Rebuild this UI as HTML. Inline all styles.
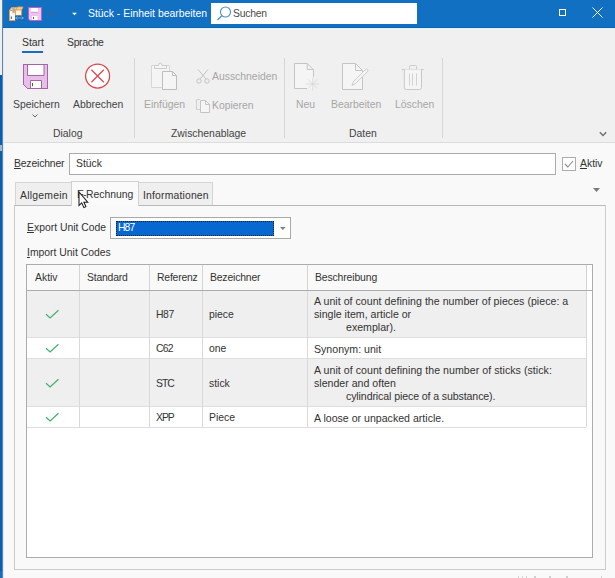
<!DOCTYPE html>
<html><head><meta charset="utf-8">
<style>
*{box-sizing:border-box;margin:0;padding:0}
html,body{width:615px;height:578px;overflow:hidden;background:#f9f9f9;font-family:"Liberation Sans",sans-serif;font-size:10.4px;color:#333}
.a{position:absolute}
.t{position:absolute;white-space:pre;line-height:1}
#strip1{left:0;top:0;width:2px;height:75px;background:#efefef}
#strip2{left:0;top:75px;width:2px;height:496px;background:#0a5eab}
#strip3{left:0;top:571px;width:2px;height:7px;background:#186cc0}
#bord{left:2px;top:0;width:1px;height:578px;background:#5d84ad}
#bord2{left:3px;top:28px;width:1px;height:550px;background:#d8ecfb}
#title{left:3px;top:0;width:612px;height:28px;background:#1170c2;border-bottom:1px solid #0f64b0}
#ribbon{left:3px;top:28px;width:612px;height:115px;background:#f0f0f0;border-top:1px solid #e3f3fd;border-bottom:1px solid #dcdcdc}
.sep{position:absolute;width:1px;background:#d6d6d6}
.dis{color:#a6a6a6}
.tw{color:#fff}
</style></head><body>
<div class="a" id="strip1"></div>
<div class="a" id="strip2"></div>
<div class="a" id="strip3"></div>
<div class="a" id="bord"></div>
<div class="a" id="title"></div>
<!-- title icons -->
<svg class="a" style="left:9px;top:6px" width="16" height="16" viewBox="0 0 16 16">
 <path d="M0.5 4.5 L2.5 1.5 H8 L6.5 4.5 Z" fill="#f9cf98" stroke="#ee9c4c" stroke-width="0.9"/>
 <path d="M0.5 4.5 H6.5 V14.5 H0.5 Z" fill="#fff6ea" stroke="#ee9c4c" stroke-width="0.9"/>
 <path d="M6.5 4 L8.5 1 H14 L12.5 4 Z" fill="#f9cf98" stroke="#ee9c4c" stroke-width="0.9"/>
 <path d="M6.5 4 H12.5 V9.5 H6.5 Z" fill="#fff6ea" stroke="#ee9c4c" stroke-width="0.9"/>
 <rect x="3.5" y="1.5" width="2.2" height="5.5" fill="#a8a8a8"/>
 <rect x="1.8" y="10.5" width="1" height="2.5" fill="#555"/>
 <rect x="6" y="9.5" width="9" height="5" fill="#1e64a8"/>
 <path d="M6.5 12 H14.5 M6.5 12 L8.5 10.6 M6.5 12 L8.5 13.4 M14.5 12 L12.5 10.6 M14.5 12 L12.5 13.4" stroke="#6db0ea" stroke-width="0.9" fill="none"/>
</svg>
<svg class="a" style="left:28px;top:7px" width="14" height="14" viewBox="0 0 14 14">
 <path d="M0.5 0.5 H13.5 V13.5 H2 L0.5 12 Z" fill="#eec3ee" stroke="#c45cc4"/>
 <rect x="3" y="1" width="7" height="4.3" fill="#fff"/>
 <path d="M3 5.3 H10" stroke="#c45cc4" stroke-width="0.6"/>
 <rect x="4" y="9" width="5.5" height="4" fill="#fff"/>
 <rect x="5" y="10" width="1" height="2" fill="#555"/>
</svg>
<svg class="a" style="left:48px;top:11px" width="8" height="5" viewBox="0 0 8 5"><path d="M1 1 L4 3.8 L7 1" stroke="#3a6592" stroke-width="1.4" fill="none"/></svg>
<svg class="a" style="left:72px;top:12px" width="5" height="4" viewBox="0 0 5 4"><path d="M0 0.8 H5 L2.5 3.3 Z" fill="#fff"/></svg>
<div class="t tw" style="left:88px;top:9px;font-size:10.4px">Stück - Einheit bearbeiten</div>
<div class="a" style="left:211px;top:3px;width:206px;height:21px;background:#fff"></div>
<svg class="a" style="left:215px;top:5px" width="17" height="17" viewBox="0 0 17 17">
 <circle cx="10.5" cy="7" r="5" stroke="#4a90c8" stroke-width="1.1" fill="none"/>
 <path d="M7 10.5 L2.5 15" stroke="#4a90c8" stroke-width="1.2"/>
</svg>
<div class="t" style="left:233px;top:9px;color:#4a4a4a;letter-spacing:-0.25px">Suchen</div>
<svg class="a" style="left:559px;top:9px" width="8" height="8" viewBox="0 0 8 8"><rect x="0.5" y="0.5" width="6" height="6" stroke="#fff" fill="none"/></svg>
<svg class="a" style="left:592px;top:7px" width="11" height="11" viewBox="0 0 11 11"><path d="M0.5 0.5 L10.5 10.5 M10.5 0.5 L0.5 10.5" stroke="#fff" stroke-width="1"/></svg>

<!-- ribbon -->
<div class="a" id="ribbon"></div>
<div class="a" id="bord2"></div>
<div class="t" style="left:22px;top:38px">Start</div>
<div class="a" style="left:22px;top:51px;width:21px;height:2px;background:#1a6dbd"></div>
<div class="t" style="left:67px;top:38px;letter-spacing:-0.3px">Sprache</div>


<!-- Dialog group -->
<svg class="a" style="left:23px;top:64px" width="25" height="25" viewBox="0 0 25 25">
 <path d="M0.5 0.5 H24.5 V24.5 H4.5 L0.5 20.5 Z" fill="#e8bfe8" stroke="#a763a7"/>
 <path d="M4.5 0.5 V11.5 H21 V0.5" fill="#fff" stroke="#9c5a9c" stroke-width="0.9"/>
 <path d="M7.5 24.5 V16.5 H18.5 V24.5" fill="#fff" stroke="#9c5a9c" stroke-width="0.9"/>
 <rect x="9" y="19" width="1" height="3.2" fill="#555"/>
 <path d="M0.5 0.5 H24.5 V24.5 H4.5 L0.5 20.5 Z" fill="none" stroke="#a763a7"/>
</svg>
<svg class="a" style="left:84px;top:63px" width="28" height="28" viewBox="0 0 28 28">
 <circle cx="13.6" cy="13" r="12" fill="#fff" stroke="#d9474d" stroke-width="1.25"/>
 <path d="M7.4 6.8 L19.8 19.2 M19.8 6.8 L7.4 19.2" stroke="#d9474d" stroke-width="1.25"/>
</svg>
<div class="t" style="left:13px;top:100px;color:#444">Speichern</div>
<svg class="a" style="left:32px;top:114px" width="6" height="4" viewBox="0 0 6 4"><path d="M0.5 0.5 L3 3 L5.5 0.5" stroke="#666" fill="none"/></svg>
<div class="t" style="left:73px;top:100px;color:#444">Abbrechen</div>
<div class="t" style="left:53px;top:129px;color:#444">Dialog</div>
<div class="sep" style="left:134px;top:58px;height:80px"></div>
<!-- Zwischenablage -->
<svg class="a" style="left:151px;top:62px" width="28" height="29" viewBox="0 0 28 29">
 <path d="M0.5 3.5 H18.5 V25.5 H0.5 Z" fill="#f4f4f4" stroke="#d6d6d6"/>
 <path d="M3.5 6.5 V3.5 H7.5 Q7.5 1 9.3 1 Q11.1 1 11.1 3.5 H15.5 V6.5 Z" fill="#f4f4f4" stroke="#cacaca"/>
 <path d="M11.5 9.5 H21.5 L25.5 13.5 V27.5 H11.5 Z" fill="#f5f5f5" stroke="#bdbdbd"/>
 <path d="M21.5 9.5 V13.5 H25.5" fill="none" stroke="#bdbdbd"/>
</svg>
<div class="t dis" style="left:144px;top:100px">Einfügen</div>
<svg class="a" style="left:196px;top:69px" width="14" height="15" viewBox="0 0 14 15">
 <path d="M2 0.5 L10 10 M12 0.5 L4 10" stroke="#c4c4c4" stroke-width="1"/>
 <circle cx="3" cy="12" r="2.2" fill="none" stroke="#c4c4c4"/>
 <circle cx="11" cy="12" r="2.2" fill="none" stroke="#c4c4c4"/>
</svg>
<div class="t dis" style="left:212px;top:72px">Ausschneiden</div>
<svg class="a" style="left:195px;top:98px" width="16" height="16" viewBox="0 0 16 16">
 <path d="M5 1.5 H1.5 V11.5 H5" fill="none" stroke="#cfcfcf"/>
 <path d="M5.5 2.5 H10.5 L14.5 6.5 V14.5 H5.5 Z" fill="#f5f5f5" stroke="#c4c4c4"/>
 <path d="M10.5 2.5 V6.5 H14.5" fill="none" stroke="#c4c4c4"/>
</svg>
<div class="t dis" style="left:212px;top:101px">Kopieren</div>
<div class="t" style="left:171px;top:129px;color:#444">Zwischenablage</div>
<div class="sep" style="left:284px;top:58px;height:80px"></div>
<!-- Daten -->
<svg class="a" style="left:294px;top:63px" width="27" height="28" viewBox="0 0 27 28">
 <path d="M0.5 0.5 H13.2 L19.5 6.8 V25.5 H0.5 Z" fill="#f5f5f5"/>
 <path d="M0.5 0.5 H13.2 L19.5 6.8 V13.8 M13 25.5 H0.5 V0.5" fill="none" stroke="#c4c4c4"/>
 <path d="M13.2 0.5 V6.5 H19.5" fill="none" stroke="#c4c4c4"/>
 <path d="M18.7 14.5 V27.5 M12.2 21 H25.2 M14.1 16.4 L23.3 25.6 M23.3 16.4 L14.1 25.6" stroke="#d6d6d6" stroke-width="0.8"/>
</svg>
<div class="t dis" style="left:296px;top:100px">Neu</div>
<svg class="a" style="left:342px;top:63px" width="27" height="28" viewBox="0 0 27 28">
 <path d="M0.5 0.5 H13.5 L20.5 7.5 V26.5 H0.5 Z" fill="#f5f5f5" stroke="#c4c4c4"/>
 <path d="M13.5 0.5 V7.5 H20.5" fill="none" stroke="#c4c4c4"/>
 <path d="M10 22.5 L11.3 18.8 L23.3 6.8 Q24.6 5.5 25.6 6.5 Q26.6 7.5 25.3 8.8 L13.3 20.8 Z" fill="#f5f5f5" stroke="#cdcdcd"/>
</svg>
<div class="t dis" style="left:331px;top:100px">Bearbeiten</div>
<svg class="a" style="left:401px;top:64px" width="24" height="27" viewBox="0 0 24 27">
 <path d="M0.8 5.5 H22.8" stroke="#cacaca"/>
 <path d="M8.5 5.5 V2.5 Q8.5 1.5 9.5 1.5 H14.5 Q15.5 1.5 15.5 2.5 V5.5" fill="none" stroke="#cacaca"/>
 <path d="M3.3 5.5 V23.5 Q3.3 25.5 5.3 25.5 H18.5 Q20.5 25.5 20.5 23.5 V5.5" fill="#f5f5f5" stroke="#c8c8c8"/>
 <path d="M8.5 9.5 V21.5 M11.5 9.5 V21.5 M15.5 9.5 V21.5" stroke="#cfcfcf" stroke-width="0.9"/>
</svg>
<div class="t dis" style="left:395px;top:100px">Löschen</div>
<div class="t" style="left:349px;top:129px;color:#444">Daten</div>
<div class="sep" style="left:442px;top:58px;height:80px"></div>
<svg class="a" style="left:599px;top:131px" width="9" height="6" viewBox="0 0 9 6"><path d="M0.8 1.3 L4 4.5 L7.2 1.3" stroke="#6e6e6e" stroke-width="1.4" fill="none"/></svg>

<!-- form -->
<div class="t" style="left:14px;top:159px;color:#333;letter-spacing:-0.17px"><u>B</u>ezeichner</div>
<div class="a" style="left:69px;top:153px;width:487px;height:22px;background:#fff;border:1px solid #ababab"></div>
<div class="t" style="left:76px;top:159px;color:#333">Stück</div>
<div class="a" style="left:562px;top:157px;width:14px;height:14px;background:#fff;border:1px solid #adadad"></div>
<svg class="a" style="left:564px;top:159px" width="10" height="10" viewBox="0 0 10 10"><path d="M1 5 L3.8 8 L9 2" stroke="#8a8a8a" stroke-width="1.1" fill="none"/></svg>
<div class="t" style="left:580px;top:159px;color:#333"><u>A</u>ktiv</div>
<svg class="a" style="left:593px;top:188px" width="7" height="4" viewBox="0 0 7 4"><path d="M0 0 H7 L3.5 4 Z" fill="#7a7a7a"/></svg>
<!-- tabs -->
<div class="a" style="left:14px;top:205px;width:592px;height:365px;border:1px solid #cbcbcb;border-top-color:#b8b8b8;background:#f9f9f9"></div>
<div class="a" style="left:15px;top:182px;width:57px;height:23px;border:1px solid #d5d5d5;border-bottom:none;background:#efefef"></div>
<div class="a" style="left:138px;top:182px;width:75px;height:23px;border:1px solid #d5d5d5;border-bottom:none;background:#efefef"></div>
<div class="a" style="left:71px;top:181px;width:68px;height:25px;border:1px solid #d0d0d0;border-bottom:none;background:#fafafa"></div>
<div class="t" style="left:20px;top:191px;color:#333;letter-spacing:0.25px">Allgemein</div>
<div class="t" style="left:77px;top:190px;color:#333">E</div><div class="t" style="left:83px;top:190px;color:#333">-</div><div class="t" style="left:86px;top:190px;color:#333">Rechnung</div>
<div class="t" style="left:143px;top:191px;color:#333;letter-spacing:0.17px">Informationen</div>
<div class="t" style="left:27px;top:223px;color:#333"><u>E</u>xport Unit Code</div>
<div class="a" style="left:110px;top:217px;width:181px;height:22px;background:#fff;border:1px solid #a9a9a9"></div>
<div class="a" style="left:116px;top:221px;width:158px;height:15px;background:#0868d2;outline:1px dotted #222;outline-offset:-1px"></div>
<div class="t tw" style="left:118px;top:223px;letter-spacing:-0.9px">H87</div>
<svg class="a" style="left:280px;top:227px" width="6" height="3" viewBox="0 0 6 3"><path d="M0 0 H5.6 L2.8 3 Z" fill="#808080"/></svg>
<div class="t" style="left:27px;top:248px;color:#333"><u>I</u>mport Unit Codes</div>

<!-- grid -->
<div class="a" style="left:26px;top:264px;width:567px;height:294px;background:#fff;border:1px solid #acacac"></div>
<div class="a" style="left:27px;top:265px;width:559px;height:25px;background:#f9f9f9"></div>
<div class="a" style="left:27px;top:290px;width:565px;height:1px;background:#acacac"></div>
<div class="a" style="left:27px;top:291px;width:559px;height:46px;background:#efefef"></div>
<div class="a" style="left:27px;top:359px;width:559px;height:47px;background:#efefef"></div>
<div class="a" style="left:27px;top:337px;width:559px;height:1px;background:#dedede"></div>
<div class="a" style="left:27px;top:358px;width:559px;height:1px;background:#dedede"></div>
<div class="a" style="left:27px;top:406px;width:559px;height:1px;background:#dedede"></div>
<div class="a" style="left:27px;top:427px;width:559px;height:1px;background:#dedede"></div>
<div class="a" style="left:79px;top:265px;width:1px;height:25px;background:#d4d4d4"></div>
<div class="a" style="left:79px;top:291px;width:1px;height:136px;background:#d9d9d9"></div>
<div class="a" style="left:149px;top:265px;width:1px;height:25px;background:#d4d4d4"></div>
<div class="a" style="left:149px;top:291px;width:1px;height:136px;background:#d9d9d9"></div>
<div class="a" style="left:202px;top:265px;width:1px;height:25px;background:#d4d4d4"></div>
<div class="a" style="left:202px;top:291px;width:1px;height:136px;background:#d9d9d9"></div>
<div class="a" style="left:307px;top:265px;width:1px;height:25px;background:#d4d4d4"></div>
<div class="a" style="left:307px;top:291px;width:1px;height:136px;background:#d9d9d9"></div>
<div class="a" style="left:586px;top:265px;width:1px;height:25px;background:#d4d4d4"></div>
<div class="a" style="left:586px;top:291px;width:1px;height:136px;background:#d9d9d9"></div>
<div class="t" style="left:35px;top:273px;color:#333">Aktiv</div>
<div class="t" style="left:87px;top:273px;color:#333;letter-spacing:-0.2px">Standard</div>
<div class="t" style="left:157px;top:273px;color:#333;letter-spacing:-0.2px">Referenz</div>
<div class="t" style="left:210px;top:273px;color:#333;letter-spacing:-0.17px">Bezeichner</div>
<div class="t" style="left:315px;top:273px;color:#333;letter-spacing:-0.12px">Beschreibung</div>
<svg class="a" style="left:45px;top:309px" width="15" height="10" viewBox="0 0 15 10"><path d="M1 5.3 L5.1 9 L13.5 1.2" stroke="#40b06c" stroke-width="1.2" fill="none"/></svg>
<svg class="a" style="left:45px;top:343px" width="15" height="10" viewBox="0 0 15 10"><path d="M1 5.3 L5.1 9 L13.5 1.2" stroke="#40b06c" stroke-width="1.2" fill="none"/></svg>
<svg class="a" style="left:45px;top:378px" width="15" height="10" viewBox="0 0 15 10"><path d="M1 5.3 L5.1 9 L13.5 1.2" stroke="#40b06c" stroke-width="1.2" fill="none"/></svg>
<svg class="a" style="left:45px;top:412px" width="15" height="10" viewBox="0 0 15 10"><path d="M1 5.3 L5.1 9 L13.5 1.2" stroke="#40b06c" stroke-width="1.2" fill="none"/></svg>
<div class="t" style="left:156px;letter-spacing:-0.4px;top:310px;color:#333">H87</div>
<div class="t" style="left:209px;top:310px;color:#333">piece</div>
<div class="t" style="left:156px;letter-spacing:-0.8px;top:344px;color:#333">C62</div>
<div class="t" style="left:209px;top:344px;color:#333">one</div>
<div class="t" style="left:156px;letter-spacing:-1px;top:379px;color:#333">STC</div>
<div class="t" style="left:209px;top:379px;color:#333">stick</div>
<div class="t" style="left:156px;letter-spacing:-1px;top:413px;color:#333">XPP</div>
<div class="t" style="left:209px;top:413px;color:#333">Piece</div>
<div class="t" style="left:314px;top:296px;color:#333;font-size:10.6px;letter-spacing:0.03px">A unit of count defining the number of pieces (piece: a</div>
<div class="t" style="left:314px;top:309px;color:#333;font-size:10.6px">single item, article or</div>
<div class="t" style="left:346px;top:322px;color:#333;font-size:10.6px">exemplar).</div>
<div class="t" style="left:314px;top:344px;color:#333;font-size:10.6px">Synonym: unit</div>
<div class="t" style="left:314px;top:365px;color:#333;font-size:10.6px;letter-spacing:0.045px">A unit of count defining the number of sticks (stick:</div>
<div class="t" style="left:314px;top:378px;color:#333;font-size:10.6px">slender and often</div>
<div class="t" style="left:346px;top:391px;color:#333;font-size:10.6px;letter-spacing:-0.11px">cylindrical piece of a substance).</div>
<div class="t" style="left:314px;top:413px;color:#333;font-size:10.6px">A loose or unpacked article.</div>

<!-- cursor -->
<svg class="a" style="left:77px;top:191px" width="13" height="18" viewBox="0 0 13 18">
 <path d="M2 1 V14.5 L4.7 11.8 L6.9 16.6 L8.9 15.6 L6.9 11.2 H10.7 Z" fill="#fff" stroke="#1a1a1a" stroke-width="1.05" stroke-linejoin="miter"/>
</svg>
<!-- left artifact -->
<div class="a" style="left:0;top:145px;width:2px;height:6px;background:#9fb8cf"></div>
<!-- bottom clipped text -->
<div class="a" style="left:518px;top:576px;width:1px;height:2px;background:#cfcfcf"></div>
<div class="a" style="left:522px;top:576px;width:1px;height:2px;background:#d6d6d6"></div>
<div class="a" style="left:526px;top:576px;width:1px;height:2px;background:#cfcfcf"></div>
<div class="a" style="left:534px;top:576px;width:2px;height:2px;background:#cfcfcf"></div>
<div class="a" style="left:549px;top:576px;width:2px;height:2px;background:#cfcfcf"></div>
<div class="a" style="left:566px;top:576px;width:2px;height:2px;background:#cfcfcf"></div>
<div class="a" style="left:601px;top:576px;width:1px;height:2px;background:#cfcfcf"></div>
</body></html>
